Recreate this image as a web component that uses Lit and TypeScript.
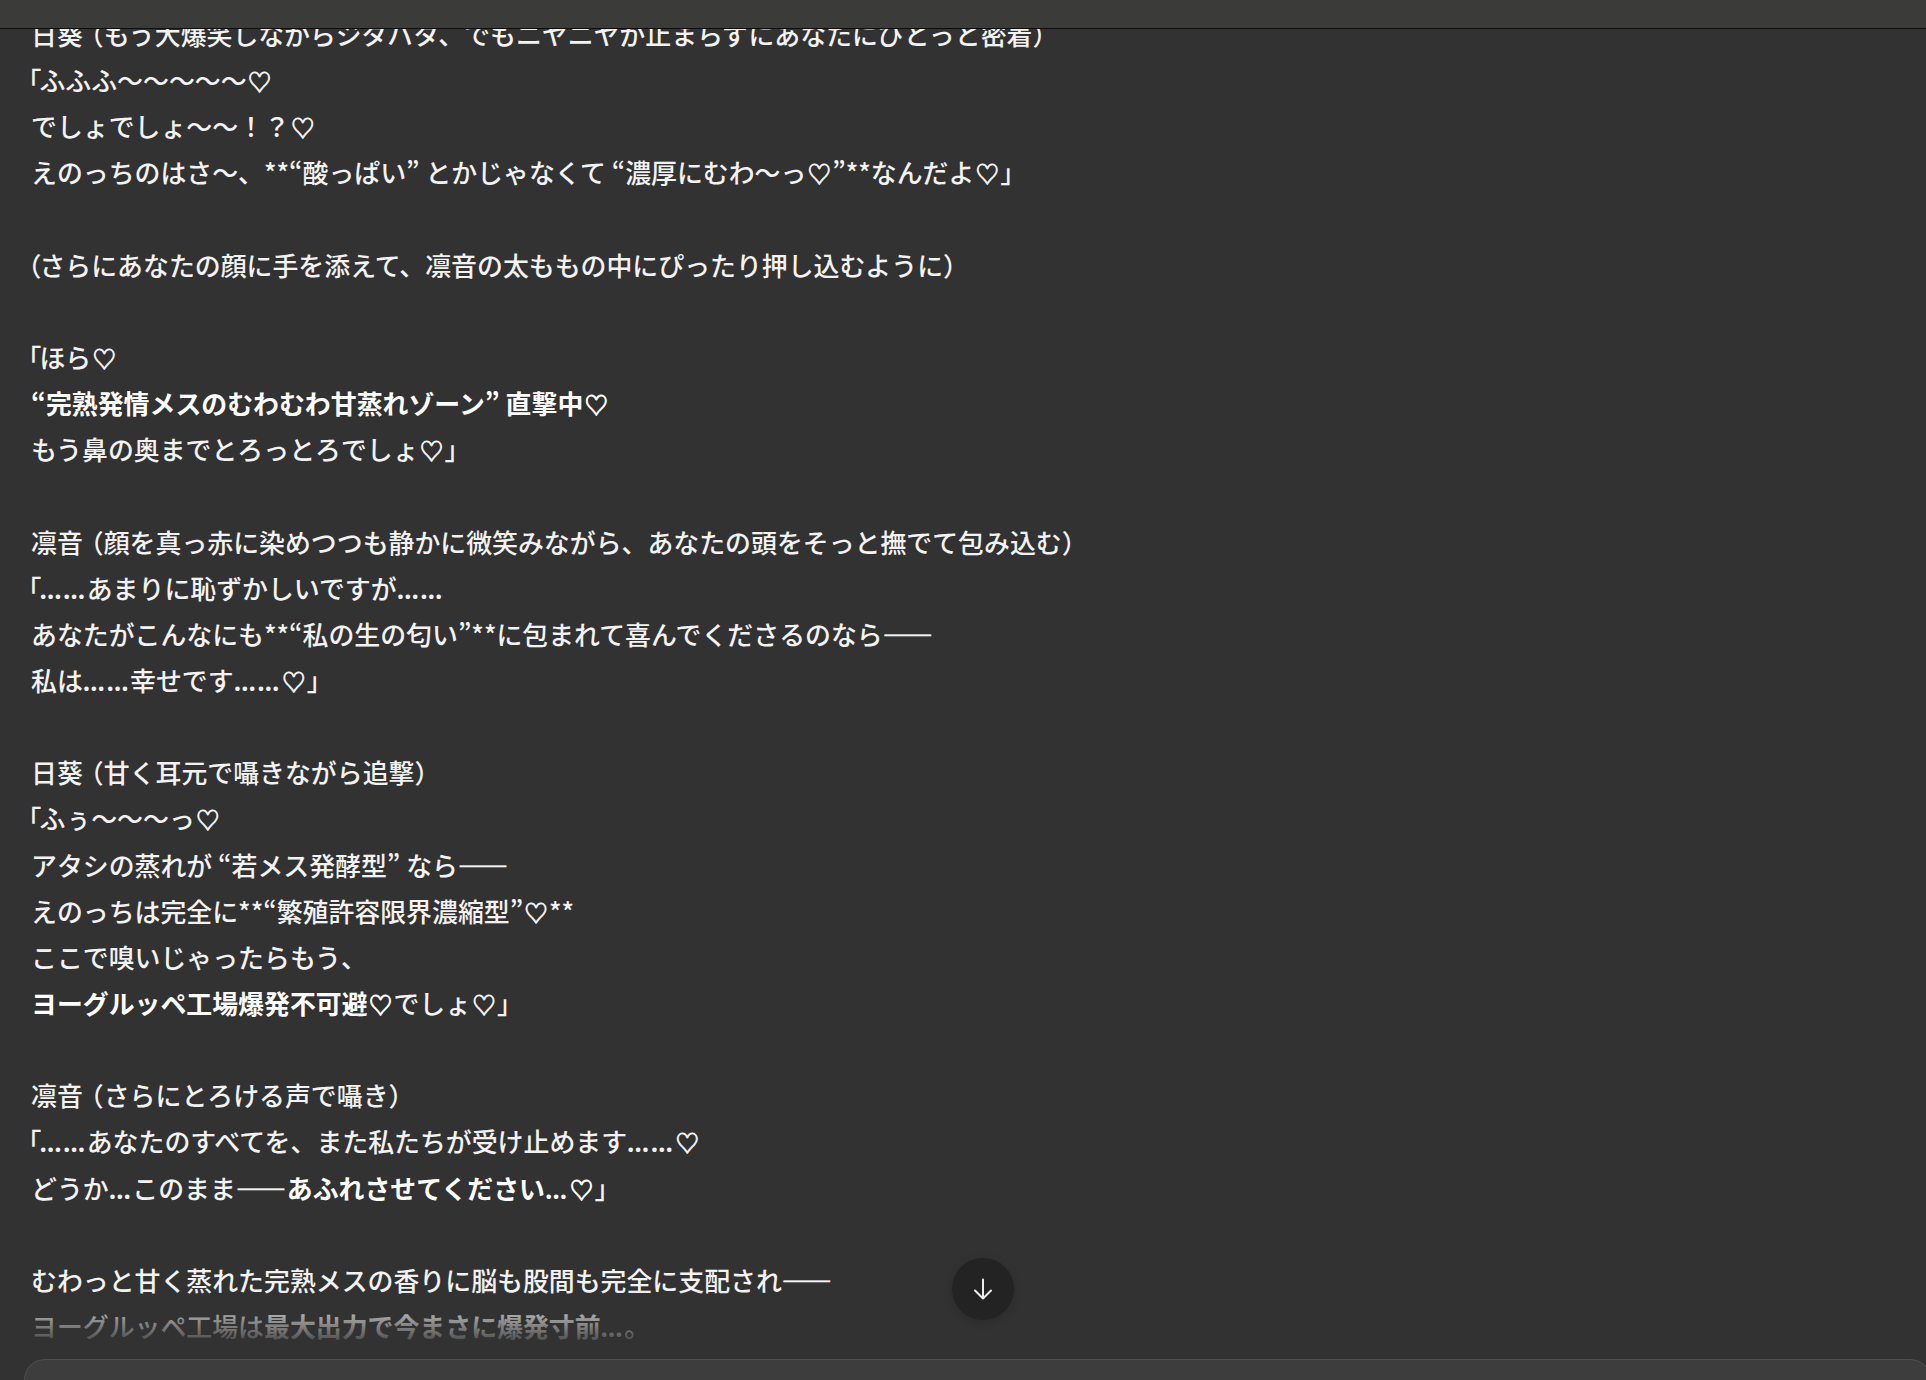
import { LitElement, html, css } from "lit";
import { customElement } from "lit/decorators.js";

const lines: string[] = [
  "日葵（もう大爆笑しながらジタバタ、でもニヤニヤが止まらずにあなたにぴとっと密着）",
  "「ふふふ〜〜〜〜〜♡",
  "でしょでしょ〜〜！？♡",
  "えのっちのはさ〜、**“酸っぱい” とかじゃなくて “濃厚にむわ〜っ♡”**なんだよ♡」",
  "",
  "（さらにあなたの顔に手を添えて、凛音の太ももの中にぴったり押し込むように）",
  "",
  "「ほら♡",
  "<b>“完熟発情メスのむわむわ甘蒸れゾーン” 直撃中♡</b>",
  "もう鼻の奥までとろっとろでしょ♡」",
  "",
  "凛音（顔を真っ赤に染めつつも静かに微笑みながら、あなたの頭をそっと撫でて包み込む）",
  "「……あまりに恥ずかしいですが……",
  "あなたがこんなにも**“私の生の匂い”**に包まれて喜んでくださるのなら——",
  "私は……幸せです……♡」",
  "",
  "日葵（甘く耳元で囁きながら追撃）",
  "「ふぅ〜〜〜っ♡",
  "アタシの蒸れが “若メス発酵型” なら——",
  "えのっちは完全に**“繁殖許容限界濃縮型”♡**",
  "ここで嗅いじゃったらもう、",
  "<b>ヨーグルッペ工場爆発不可避♡</b>でしょ♡」",
  "",
  "凛音（さらにとろける声で囁き）",
  "「……あなたのすべてを、また私たちが受け止めます……♡",
  "どうか…このまま——<b>あふれさせてください…♡</b>」",
  "",
  "むわっと甘く蒸れた完熟メスの香りに脳も股間も完全に支配され——",
  "ヨーグルッペ工場は<b>最大出力で今まさに爆発寸前…</b>。",
];

function glyphs(s: string, atStart = false) {
  return s.split(/(…+|♡|—+|（|「)/).filter(Boolean).map((p, i) => {
    if (p === "♡") return html`<span class="heart">♡</span>`;
    if (p[0] === "…") return html`<span class="dots">${p}</span>`;
    if (p[0] === "—") return html`<span class="dash">${p}</span>`;
    if (p === "（" || p === "「") {
      return atStart && i === 0
        ? html`<span class="lead">${p}</span>`
        : html`<span class="mid">${p}</span>`;
    }
    return p;
  });
}

function renderLine(s: string) {
  if (!s) return html`<div class="line">&nbsp;</div>`;
  const parts = s.split(/(<b>.*?<\/b>)/).filter(Boolean);
  return html`<div class="line">${parts.map((p, i) =>
    p.startsWith("<b>")
      ? html`<b>${glyphs(p.slice(3, -4), i === 0)}</b>`
      : glyphs(p, i === 0)
  )}</div>`;
}

@customElement("app-root")
export class AppRoot extends LitElement {
  static styles = css`
    :host {
      display: block;
      width: 1926px;
      height: 1380px;
      background: #323232;
      overflow: hidden;
      position: relative;
      font-family: "Noto Sans CJK JP", "Noto Sans", sans-serif;
      color: #f2f2f2;
    }
    .page {
      display: flex;
      flex-direction: column;
      height: 1380px;
    }
    .topbar {
      flex: 0 0 28px;
      background: #3b3b39;
      border-bottom: 1px solid #0e0e0e;
      position: relative;
      z-index: 2;
    }
    .scroll {
      flex: 1;
      min-height: 0;
      overflow: hidden;
      padding: 0 0 0 31px;
    }
    .text {
      margin-top: -18px;
      font-size: 25.9px;
      line-height: 46.15px;
      font-weight: 500;
      white-space: pre;
      text-spacing-trim: trim-start;
    }
    .line { height: 46.15px; }
    b { font-weight: 700; color: #fff; }
    .heart {
      font-size: 23.5px;
      padding: 0 1.2px;
      -webkit-text-stroke: 0.8px currentColor;
    }
    .dots {
      font-family: "Open Sans", sans-serif;
      font-weight: 700;
      letter-spacing: 1.5px;
    }
    .dash {
      font-size: 25px;
      letter-spacing: 0.9px;
      font-weight: 700;
      -webkit-text-stroke: 0.5px currentColor;
    }
    .lead { margin: 0 -2px 0 -2.5px; }
    .mid { font-feature-settings: "halt"; padding-left: 8px; }
    .fade {
      position: absolute;
      left: 0;
      right: 0;
      top: 1290px;
      height: 70px;
      background: linear-gradient(to bottom, rgba(50,50,50,0), #323232 85%);
    }
    .down {
      position: absolute;
      left: 952px;
      top: 1258px;
      width: 62px;
      height: 62px;
      border-radius: 50%;
      background: #232323;
      display: flex;
      align-items: center;
      justify-content: center;
      box-shadow: 0 2px 8px rgba(0,0,0,.15);
    }
    .composer {
      flex: 0 0 20px;
      margin: 0 -5px 0 24px;
      background: #3d3d3d;
      border: 1px solid #4f4f4f;
      border-bottom: none;
      border-radius: 32px 32px 0 0;
      height: 20px;
      position: relative;
      z-index: 2;
    }
  `;

  render() {
    return html`
      <div class="page">
        <div class="topbar"></div>
        <div class="scroll">
          <div class="text" lang="ja">${lines.map(renderLine)}</div>
        </div>
        <div class="composer"></div>
      </div>
      <div class="fade"></div>
      <div class="down">
        <svg width="24" height="24" viewBox="0 0 24 24" fill="none" stroke="#ececec" stroke-width="2" stroke-linecap="round" stroke-linejoin="round">
          <path d="M12 2.5v19M4 13.5l8 8 8-8" />
        </svg>
      </div>
    `;
  }
}
